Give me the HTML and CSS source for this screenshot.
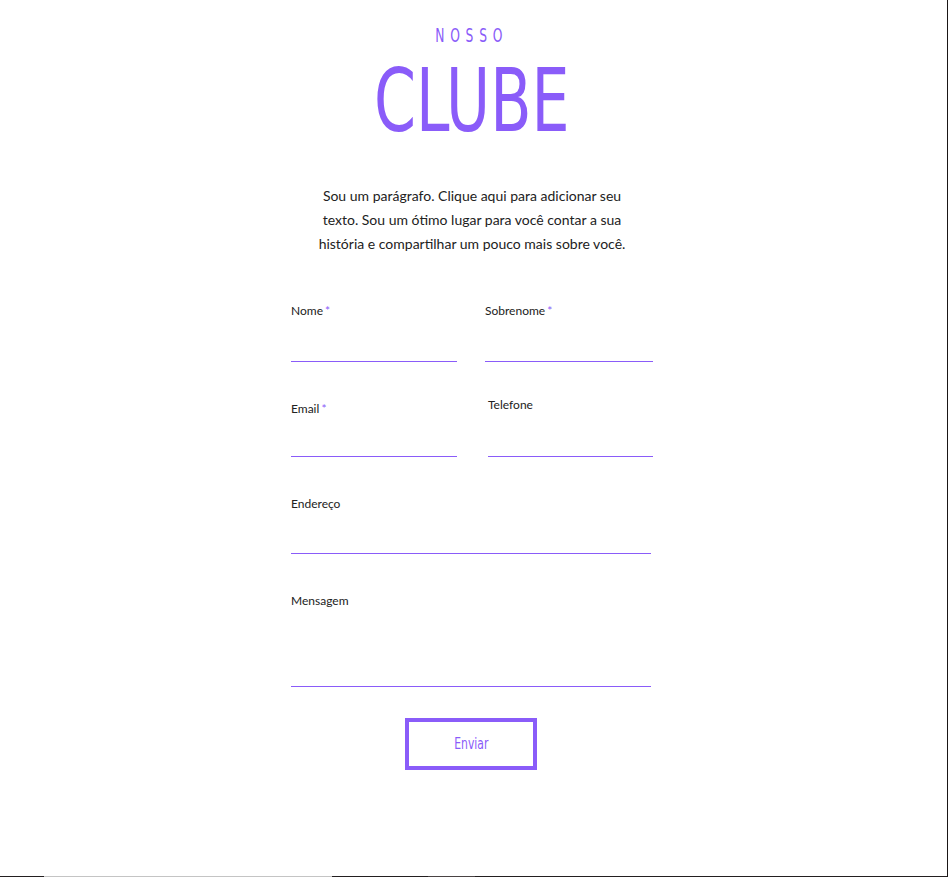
FILE: index.html
```html
<!DOCTYPE html>
<html lang="pt">
<head>
<meta charset="utf-8">
<title>Nosso Clube</title>
<link rel="stylesheet" href="styles.css">
</head>
<body>
<div class="frame">
  <main class="page">
    <header class="hero">
      <p class="eyebrow"><span>NOSSO</span></p>
      <h1 class="title"><span>CLUBE</span></h1>
    </header>
    <p class="intro">Sou um parágrafo. Clique aqui para adicionar seu texto. Sou um ótimo lugar para você contar a sua história e compartilhar um pouco mais sobre você.</p>
    <form class="form">
      <div class="row">
        <label class="field f-nome"><span class="lbl">Nome <i>*</i></span></label>
        <label class="field f-sobrenome"><span class="lbl">Sobrenome <i>*</i></span></label>
      </div>
      <div class="row">
        <label class="field f-email"><span class="lbl">Email <i>*</i></span></label>
        <label class="field f-tel"><span class="lbl">Telefone</span></label>
      </div>
      <label class="field f-end"><span class="lbl">Endereço</span></label>
      <label class="field f-msg"><span class="lbl">Mensagem</span></label>
      <div class="actions">
        <button type="button" class="btn"><span>Enviar</span></button>
      </div>
    </form>
  </main>
  <div class="scrollbar"></div>
</div>
</body>
</html>
```

FILE: styles.css
```css
* { box-sizing: border-box; }
html, body { margin: 0; padding: 0; background: #fff; }
body { font-family: "Lato", "Open Sans", sans-serif; color: #1f1f1f; }

.frame {
  position: relative;
  width: 948px;
  height: 877px;
  border-right: 1px solid #1a1616;
  overflow: hidden;
}

.page {
  width: 362px;
  margin: 0 0 0 291px;
  display: flex;
  flex-direction: column;
}

.hero { text-align: center; margin-left: -40px; margin-right: -40px; }

.eyebrow {
  margin: 0;
  padding-top: 24px;
  height: 44px;
  font-family: "Liberation Sans Narrow", "DejaVu Sans Condensed", "Liberation Sans", sans-serif;
  font-size: 19px;
  line-height: 22px;
  color: #8a5cf9;
}
.eyebrow span {
  display: inline-block;
  letter-spacing: 8px;
  transform: scaleX(0.72);
}

.title {
  margin: 0;
  padding-top: 9px;
  height: 138px;
  font-family: "Liberation Sans Narrow", "DejaVu Sans Condensed", "Liberation Sans", sans-serif;
  font-weight: 400;
  font-size: 88px;
  line-height: 96px;
  color: #8a5cf9;
}
.title span { display: inline-block; transform: scaleX(0.76); }

.intro {
  align-self: center;
  width: 320px;
  margin: 0;
  padding-top: 2px;
  height: 121px;
  text-align: center;
  font-size: 14px;
  line-height: 24px;
  color: #222;
}

.form { display: flex; flex-direction: column; }

.row {
  display: grid;
  grid-template-columns: 166px 168px;
  column-gap: 28px;
}

.field {
  display: block;
  border-bottom: 1px solid #8a5cf9;
  margin-bottom: 39px;
}
.lbl {
  display: block;
  font-size: 12px;
  line-height: 16px;
  color: #222;
  word-spacing: -1px;
}
.lbl i { font-style: normal; color: #8a5cf9; }

.f-nome, .f-sobrenome { height: 59px; }
.f-email { height: 56px; }
.f-tel { height: 60px; margin-top: -4px; margin-left: 3px; }
.f-end { width: 360px; height: 58px; }
.f-msg { width: 360px; height: 94px; margin-bottom: 31px; }

.actions { display: flex; justify-content: center; padding-right: 2px; }

.btn {
  width: 132px;
  height: 52px;
  border: 4px solid #8a5cf9;
  background: #fff;
  padding: 0;
  color: #8a5cf9;
  font-family: "Liberation Sans Narrow", "DejaVu Sans Condensed", "Liberation Sans", sans-serif;
  font-size: 15px;
  cursor: pointer;
}
.btn span { display: inline-block; transform: scaleX(0.8); }

.scrollbar {
  position: absolute;
  left: 0;
  bottom: 0;
  width: 947px;
  height: 1px;
  background: linear-gradient(to right,
    #231f20 0, #231f20 44px,
    #c4c4c4 44px, #c4c4c4 332px,
    #231f20 332px, #231f20 428px,
    #4a4344 428px, #4a4344 475px,
    #231f20 475px, #231f20 100%);
}
```
